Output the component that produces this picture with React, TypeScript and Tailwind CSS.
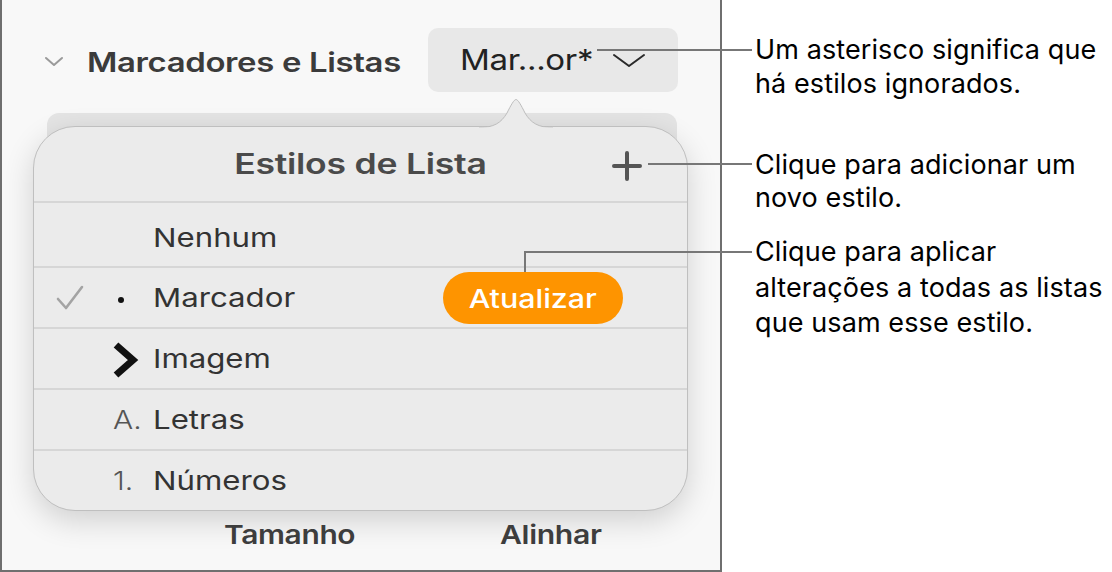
import React from "react";

const font = { fontFamily: "Inter, 'Liberation Sans', sans-serif" };

function Check() {
  return (
    <svg width="30" height="26" viewBox="0 0 30 26" fill="none">
      <path d="M3 14 L11 23 L27 2" stroke="#a3a3a3" strokeWidth="2.6" strokeLinecap="round" strokeLinejoin="round" />
    </svg>
  );
}

function Row({ marker, label, extra, tall }: { marker?: React.ReactNode; label: string; extra?: React.ReactNode; tall?: boolean }) {
  return (
    <>
      <div className="h-[2px] bg-[#d6d6d6]" />
      <div className={`flex items-center ${tall ? "h-[63px] pt-[6px]" : "h-[59px]"}`}>
        <div className="w-[79px] flex pl-[21px]">{extra}</div>
        <div className="w-[40px] flex items-center">{marker}</div>
        <div className="text-[26px] text-[#333] scale-x-[1.2] origin-left">{label}</div>
      </div>
    </>
  );
}

export default function App() {
  return (
    <div className="relative flex w-[1112px] h-[572px] bg-white" style={font}>
      {/* inspector panel */}
      <div className="w-[722px] h-[572px] bg-[#f8f8f8] border-l-2 border-r-2 border-b-2 border-[#6f6f6f] flex flex-col">
        <div className="flex items-center h-[92px] pt-[28px]">
          <svg className="ml-[42px] mt-[3px]" width="20" height="12" viewBox="0 0 20 12" fill="none">
            <path d="M2 2 L10 9 L18 2" stroke="#9a9a9a" strokeWidth="2" strokeLinecap="round" strokeLinejoin="round" />
          </svg>
          <div className="ml-[23px] w-[341px] mt-[6px]">
            <div className="text-[27px] font-semibold text-[#3b3b3b] tracking-[-0.3px] scale-x-[1.22] origin-left">Marcadores e Listas</div>
          </div>
          <div className="w-[250px] h-[64px] rounded-[10px] bg-[#e8e8e8] flex items-center pl-[32px]">
            <span className="w-[152px] text-[29px] text-[#222] tracking-[-0.3px] scale-x-[1.14] origin-left">Mar...or*</span>
            <svg className="mt-[2px]" width="34" height="18" viewBox="0 0 34 18" fill="none">
              <path d="M2 3 L17 14 L32 3" stroke="#2a2a2a" strokeWidth="2" strokeLinecap="round" strokeLinejoin="round" />
            </svg>
          </div>
        </div>

        {/* underlying card */}
        <div className="mt-[21px] ml-[45px] mr-[43px] h-[40px] bg-[#e4e4e4] rounded-[12px]" />

        <div className="relative -mt-[27px] ml-[31px] mr-[32px] bg-[#ebebeb] border border-[#bfbfbf] rounded-[42px] shadow-[0_10px_30px_rgba(0,0,0,0.16)]">
          <svg className="absolute -top-[29px] left-[445px]" width="74" height="32" viewBox="0 0 74 32" fill="none">
            <path d="M0 29.5 C15 29.5 22 25 28 15 C32 7 35 1.5 37 1.5 C39 1.5 42 7 46 15 C52 25 59 29.5 74 29.5" fill="#ebebeb" stroke="#bdbdbd" strokeWidth="1" />
            <rect x="0" y="29.4" width="74" height="3" fill="#ebebeb" />
          </svg>
          <div className="h-[74px] flex items-center justify-center relative">
            <span className="text-[28px] font-semibold text-[#4a4a4a] tracking-[-0.2px] scale-x-[1.27]">Estilos de Lista</span>
            <svg className="absolute right-[44px] top-[23px]" width="32" height="32" viewBox="0 0 32 32" fill="none">
              <path d="M16 3 V29 M3 16 H29" stroke="#555" strokeWidth="4" strokeLinecap="round" />
            </svg>
          </div>
          <Row tall label="Nenhum" />
          <div className="relative">
            <Row
              label="Marcador"
              extra={<Check />}
              marker={<span className="ml-[5px] w-[6px] h-[6px] rounded-full bg-[#111] mt-[4px]" />}
            />
            <div className="absolute left-[409px] top-[6px] w-[180px] h-[52px] rounded-full bg-[#fe9400] flex items-center justify-center">
              <span className="text-white text-[26px] font-medium scale-x-[1.17]">Atualizar</span>
            </div>
          </div>
          <Row
            label="Imagem"
            marker={
              <svg className="mt-[2px] -ml-[2px]" width="28" height="36" viewBox="0 0 28 36" fill="none">
                <path d="M5 3 L22 18 L5 33" stroke="#111" strokeWidth="7" strokeLinejoin="miter" />
              </svg>
            }
          />
          <Row label="Letras" marker={<span className="text-[26px] text-[#555] font-light scale-x-[1.15] origin-left">A.</span>} />
          <Row label="Números" marker={<span className="text-[26px] text-[#555] font-light scale-x-[1.15] origin-left">1.</span>} />
        </div>

        <div className="flex mt-[4px] text-[26px] font-semibold text-[#3d3d3d] tracking-[-0.3px]">
          <span className="ml-[222px] w-[276px] scale-x-[1.15] origin-left">Tamanho</span>
          <span className="scale-x-[1.16] origin-left">Alinhar</span>
        </div>
      </div>

      {/* callout text */}
      <div className="flex flex-col pl-[33px] text-[27px] text-black tracking-[0.1px]">
        <div className="mt-[33px] leading-[34px]">
          Um asterisco significa que
          <br />
          há estilos ignorados.
        </div>
        <div className="mt-[47px] leading-[33px]">
          Clique para adicionar um
          <br />
          novo estilo.
        </div>
        <div className="mt-[20px] leading-[35.5px]">
          Clique para aplicar
          <br />
          alterações a todas as listas
          <br />
          que usam esse estilo.
        </div>
      </div>

      {/* callout lines */}
      <div className="absolute left-[597px] top-[49px] w-[155px] h-[2px] bg-[#777]" />
      <div className="absolute left-[648px] top-[163px] w-[104px] h-[2px] bg-[#777]" />
      <div className="absolute left-[524px] top-[251px] w-[228px] h-[2px] bg-[#777]" />
      <div className="absolute left-[524px] top-[251px] w-[2px] h-[21px] bg-[#777]" />
    </div>
  );
}
